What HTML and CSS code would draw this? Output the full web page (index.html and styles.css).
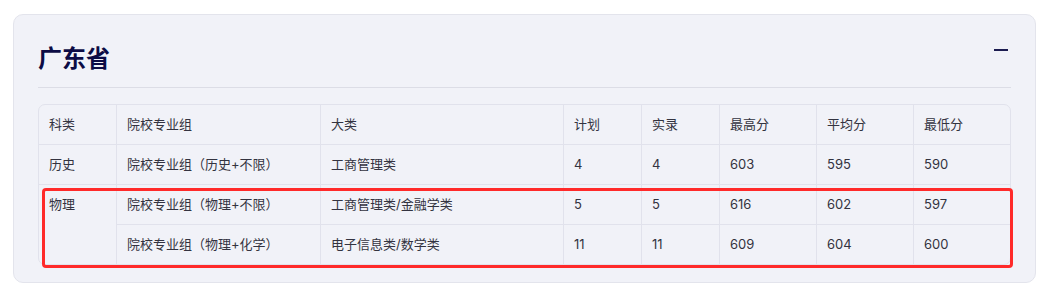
FILE: index.html
```html
<!DOCTYPE html>
<html lang="zh-CN">
<head>
<meta charset="utf-8">
<title>广东省</title>
<link rel="stylesheet" href="styles.css">
</head>
<body>
<div class="page">
  <section class="card">
    <header class="card-head">
      <h2 class="title">广东省</h2>
      <span class="collapse" aria-label="收起"></span>
    </header>
    <div class="table-area">
      <div class="table-wrap">
        <table class="score-table">
          <colgroup>
            <col class="c1"><col class="c2"><col class="c3"><col class="c4"><col class="c5"><col class="c6"><col class="c7"><col class="c8">
          </colgroup>
          <thead>
            <tr><th>科类</th><th>院校专业组</th><th>大类</th><th>计划</th><th>实录</th><th>最高分</th><th>平均分</th><th>最低分</th></tr>
          </thead>
          <tbody>
            <tr><td>历史</td><td>院校专业组（历史+不限）</td><td>工商管理类</td><td>4</td><td>4</td><td>603</td><td>595</td><td>590</td></tr>
            <tr><td rowspan="2" class="span-cell">物理</td><td>院校专业组（物理+不限）</td><td>工商管理类/金融学类</td><td>5</td><td>5</td><td>616</td><td>602</td><td>597</td></tr>
            <tr class="last"><td>院校专业组（物理+化学）</td><td>电子信息类/数学类</td><td>11</td><td>11</td><td>609</td><td>604</td><td>600</td></tr>
          </tbody>
        </table>
      </div>
      <div class="highlight"></div>
    </div>
  </section>
</div>
</body>
</html>
```

FILE: styles.css
```css
* { box-sizing: border-box; }
html, body { margin: 0; padding: 0; background: #ffffff; }
body {
  font-family: Inter, "Noto Sans CJK SC", sans-serif;
  color: #333340;
}
.page { padding: 14px 13px 0 13px; }
.card {
  width: 1023px;
  height: 269px;
  background: #f1f2f8;
  border: 1px solid #e3e4ec;
  border-radius: 10px;
  padding: 26px 24px 0 24px;
}
.card-head {
  display: flex;
  justify-content: space-between;
  align-items: flex-start;
  padding-bottom: 14px;
  border-bottom: 1px solid #dcdde6;
  margin-bottom: 16px;
}
.title {
  margin: 0;
  font-family: "Noto Sans CJK SC", sans-serif;
  font-size: 24px;
  line-height: 32px;
  font-weight: 700;
  color: #0c0c45;
}
.collapse {
  display: block;
  width: 14px;
  height: 2px;
  background: #1c1c50;
  margin-top: 8px;
  margin-right: 3px;
}
.table-area { position: relative; }
.table-wrap {
  border: 1px solid #e1e2ec;
  border-radius: 7px;
  overflow: hidden;
}
.score-table {
  width: 100%;
  table-layout: fixed;
  border-collapse: separate;
  border-spacing: 0;
  font-size: 13px;
}
.c1 { width: 77px; }
.c2 { width: 204px; }
.c3 { width: 243px; }
.c4 { width: 78px; }
.c5 { width: 78px; }
.c6 { width: 97px; }
.c7 { width: 97px; }
.c8 { width: 98px; }
.score-table th, .score-table td {
  padding: 11px 10px 12px 10px;
  line-height: 16px;
  text-align: left;
  font-weight: 400;
  color: #333340;
  border-bottom: 1px solid #e1e2ec;
  border-left: 1px solid #e1e2ec;
  vertical-align: middle;
  white-space: nowrap;
}
.score-table th:first-child, .score-table tbody tr:not(.last) td:first-child { border-left: none; }
.score-table tr.last td, .score-table td.span-cell { border-bottom: none; }
.score-table td.span-cell { vertical-align: top; }
.highlight {
  position: absolute;
  left: 4px;
  top: 84px;
  width: 971px;
  height: 80px;
  border: 3px solid #ff2a2a;
  border-radius: 4px;
  pointer-events: none;
}
```
